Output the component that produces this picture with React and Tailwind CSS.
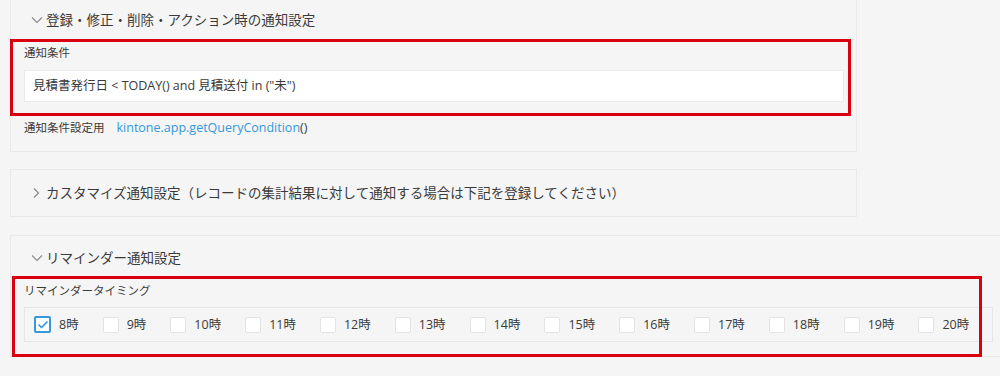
import { Check } from "lucide-react";

const HOURS = [8, 9, 10, 11, 12, 13, 14, 15, 16, 17, 18, 19, 20];
const FONT = "font-['Open_Sans',_'Noto_Sans_CJK_JP',_sans-serif]";

function ChevronDown() {
  return (
    <svg width="12" height="8" viewBox="0 0 12 8" className="shrink-0">
      <polyline points="1,1.5 6,6.5 11,1.5" fill="none" stroke="#8a8a8a" strokeWidth="1.1" />
    </svg>
  );
}

function ChevronRight() {
  return (
    <svg width="12" height="12" viewBox="0 0 12 12" className="shrink-0">
      <polyline points="3,1.5 7.5,6 3,10.5" fill="none" stroke="#8a8a8a" strokeWidth="1.2" />
    </svg>
  );
}

function SectionHeader({ open, children }) {
  return (
    <div className="flex items-center h-[16px] pl-[7px] text-[13.5px] leading-[16px] text-[#3a3a3a] whitespace-nowrap">
      {open ? <ChevronDown /> : <ChevronRight />}
      <span className="ml-[3px]">{children}</span>
    </div>
  );
}

function HourBox({ hour, checked }) {
  return (
    <label className="flex items-center shrink-0 mr-[24px]">
      {checked ? (
        <span className="w-[17px] h-[17px] rounded-[2px] border-2 border-[#3498db] bg-white flex items-center justify-center">
          <Check size={12} strokeWidth={3.5} color="#3498db" />
        </span>
      ) : (
        <span className="w-[16px] h-[16px] rounded-[2px] border border-[#e3e3e3] bg-white" />
      )}
      <span className="ml-[8px] text-[12.5px] leading-[16px] text-[#3a3a3a] whitespace-nowrap">{hour}時</span>
    </label>
  );
}

export default function App() {
  return (
    <div className={`relative w-[1000px] h-[376px] overflow-hidden bg-[#f5f5f5] ${FONT}`}>
      {/* 登録・修正・削除・アクション時 */}
      <section className="ml-[10px] w-[847px] border border-t-0 border-[#e9e9e9] pl-[13px] pr-[12px] pt-[12px] pb-[15px]">
        <SectionHeader open>登録・修正・削除・アクション時の通知設定</SectionHeader>
        <div className="mt-[17px] text-[11.5px] leading-[16px] text-[#3a3a3a]">通知条件</div>
        <div className="mt-[9px] h-[32px] bg-white border border-[#ebebeb] flex items-center pl-[8px] text-[12.5px] text-[#3a3a3a] whitespace-nowrap">
          見積書発行日 &lt; TODAY() and 見積送付 in ("未")
        </div>
        <div className="mt-[18px] flex items-center text-[11.5px] leading-[16px] text-[#3a3a3a] whitespace-nowrap">
          <span>通知条件設定用</span>
          <span className="ml-[12px] text-[12.5px]">
            <a className="text-[#3498db]">kintone.app.getQueryCondition</a>()
          </span>
        </div>
      </section>

      {/* カスタマイズ通知設定 */}
      <section className="mt-[17px] ml-[10px] w-[847px] border border-[#e9e9e9] pl-[13px] pt-[15px] pb-[15px]">
        <SectionHeader>カスタマイズ通知設定（レコードの集計結果に対して通知する場合は下記を登録してください）</SectionHeader>
      </section>

      {/* リマインダー通知設定 */}
      <section className="mt-[18px] ml-[10px] w-[1000px] border border-[#e9e9e9] pl-[13px] pt-[14px] pb-[14px]">
        <SectionHeader open>リマインダー通知設定</SectionHeader>
        <div className="mt-[17px] text-[11.5px] leading-[16px] text-[#3a3a3a]">リマインダータイミング</div>
        <div className="mt-[8px] w-[969px] h-[35px] border border-[#e6e6e6] flex items-center pl-[9px] overflow-hidden">
          {HOURS.map((h) => (
            <HourBox key={h} hour={h} checked={h === 8} />
          ))}
        </div>
      </section>

      {/* annotation boxes */}
      <div className="absolute left-[10px] top-[39px] w-[841px] h-[77px] border-[3px] border-[#d9000f]" />
      <div className="absolute left-[12px] top-[276px] w-[970px] h-[81px] border-[3px] border-[#d9000f]" />
    </div>
  );
}
